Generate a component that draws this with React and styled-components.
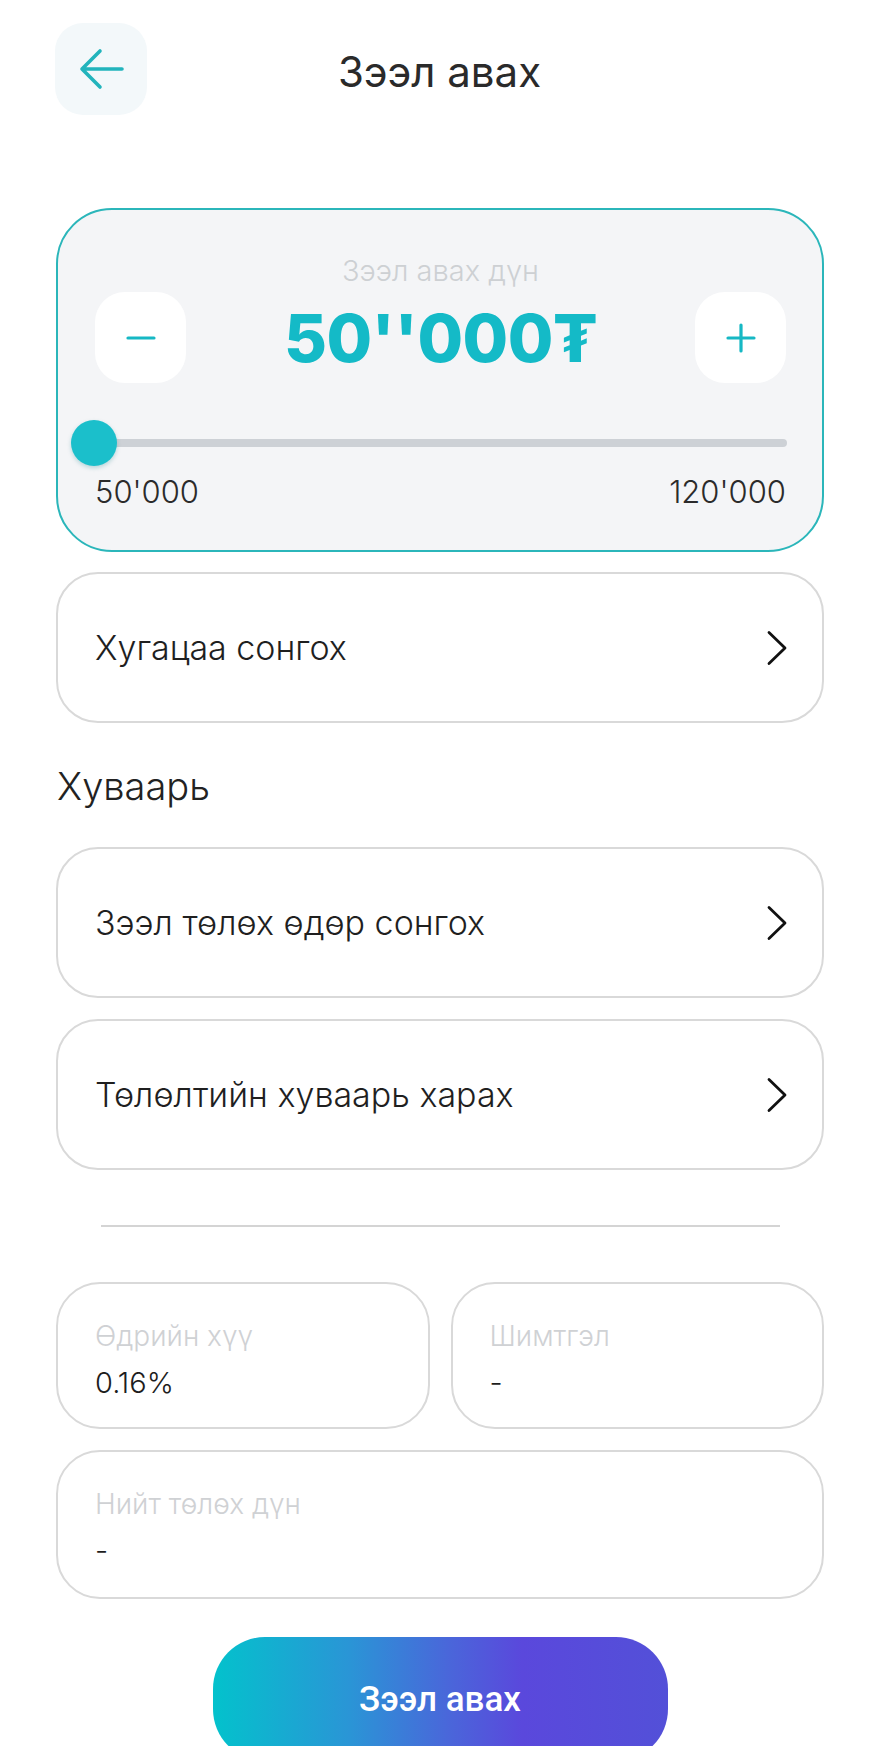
import React from 'react';
import styled, { createGlobalStyle } from 'styled-components';

// Global reset: no body margin, one sans stack for the whole screen
const GlobalStyle = createGlobalStyle`
  * { box-sizing: border-box; }
  body {
    margin: 0;
    background: #ffffff;
    font-family: Inter, "Noto Sans", sans-serif;
    color: #222222;
  }
`;

const BackIcon = () => (
  <svg width="92" height="92" viewBox="0 0 92 92" fill="none">
    <path d="M27 46 H67 M45 28 L27 46 L45 64" stroke="#22b4bc" strokeWidth="3.6" strokeLinecap="round" strokeLinejoin="round" />
  </svg>
);

const Chevron = () => (
  <svg width="22" height="36" viewBox="0 0 22 36" fill="none">
    <path d="M3 2.5 L19 18 L3 33.5" stroke="#111111" strokeWidth="2.8" strokeLinecap="round" strokeLinejoin="round" />
  </svg>
);

const MinusIcon = () => (
  <svg width="30" height="30" viewBox="0 0 30 30" fill="none">
    <path d="M2 15 H28" stroke="#16b8c4" strokeWidth="3.2" strokeLinecap="round" />
  </svg>
);

const PlusIcon = () => (
  <svg width="30" height="30" viewBox="0 0 30 30" fill="none">
    <path d="M2 15 H28 M15 2 V28" stroke="#16b8c4" strokeWidth="3.2" strokeLinecap="round" />
  </svg>
);

const LoanScreen = () => {
  const min = 50000;
  const max = 120000;
  const amount = 50000;
  const pct = ((amount - min) / (max - min)) * 100;

  return (
    <Page>
      <Header>
        <BackButton aria-label="back"><BackIcon /></BackButton>
        <Title>Зээл авах</Title>
        <span />
      </Header>

      <AmountCard>
        <AmountLabel>Зээл авах дүн</AmountLabel>
        <AmountRow>
          <StepButton aria-label="minus"><MinusIcon /></StepButton>
          <Amount>50''000₮</Amount>
          <StepButton aria-label="plus"><PlusIcon /></StepButton>
        </AmountRow>
        <Slider>
          <Track />
          <Thumb style={{ left: `calc(${pct}% - ${pct * 0.46}px)` }} />
        </Slider>
        <RangeLabels>
          <span>50'000</span>
          <span>120'000</span>
        </RangeLabels>
      </AmountCard>

      <SelectRow $top={20}>
        <RowText>Хугацаа сонгох</RowText>
        <Chevron />
      </SelectRow>

      <SectionTitle>Хуваарь</SectionTitle>

      <SelectRow $top={38}>
        <RowText>Зээл төлөх өдөр сонгох</RowText>
        <Chevron />
      </SelectRow>
      <SelectRow $top={21}>
        <RowText>Төлөлтийн хуваарь харах</RowText>
        <Chevron />
      </SelectRow>

      <Divider />

      <InfoGrid>
        <InfoCard>
          <InfoLabel>Өдрийн хүү</InfoLabel>
          <InfoValue>0.16%</InfoValue>
        </InfoCard>
        <InfoCard>
          <InfoLabel>Шимтгэл</InfoLabel>
          <InfoValue>-</InfoValue>
        </InfoCard>
        <InfoCard $wide>
          <InfoLabel>Нийт төлөх дүн</InfoLabel>
          <InfoValue>-</InfoValue>
        </InfoCard>
      </InfoGrid>

      <SubmitButton>Зээл авах</SubmitButton>
    </Page>
  );
};

const Page = styled.div`
  height: 1746px;
  overflow: hidden;
  padding: 23px 56px 0;
  display: flex;
  flex-direction: column;

  & > * {
    flex-shrink: 0;
  }
`;

const Header = styled.header`
  display: grid;
  grid-template-columns: 92px 1fr 92px;
  align-items: center;
  margin-left: -1px;
`;

const BackButton = styled.button`
  width: 92px;
  height: 92px;
  border: none;
  border-radius: 28px;
  background: #f3f8fa;
  padding: 0;
  display: flex;
  align-items: center;
  justify-content: center;
`;

const Title = styled.h1`
  margin: 0;
  text-align: center;
  font-size: 42px;
  font-weight: 400;
  color: #2a2a2a;
  line-height: 48px;
  padding-top: 6px;
`;

const AmountCard = styled.section`
  margin-top: 93px;
  height: 344px;
  border: 2px solid #2bb6ba;
  border-radius: 56px;
  background: #f4f5f7;
  padding: 0 36px 0 37px;
  display: flex;
  flex-direction: column;
`;

const AmountLabel = styled.div`
  margin-top: 44px;
  text-align: center;
  font-size: 29px;
  line-height: 34px;
  font-weight: 300;
  color: #cdd0d3;
`;

const AmountRow = styled.div`
  margin-top: 4px;
  height: 91px;
  display: flex;
  align-items: center;
  justify-content: space-between;
`;

const StepButton = styled.button`
  width: 91px;
  height: 91px;
  border: none;
  border-radius: 30px;
  background: #ffffff;
  padding: 0;
  display: flex;
  align-items: center;
  justify-content: center;
`;

const Amount = styled.div`
  font-size: 66px;
  line-height: 1;
  font-weight: 800;
  letter-spacing: -0.5px;
  color: #14bac7;
`;

const Slider = styled.div`
  position: relative;
  margin: 37px -1px 0 -24px;
  height: 46px;
  display: flex;
  align-items: center;
`;

const Track = styled.div`
  flex: 1;
  height: 8px;
  margin-left: 23px;
  border-radius: 4px;
  background: #cdd1d6;
`;

const Thumb = styled.div`
  position: absolute;
  top: 0;
  width: 46px;
  height: 46px;
  border-radius: 50%;
  background: #1bbfcb;
  box-shadow: 0 2px 4px rgba(0, 120, 130, 0.25);
`;

const RangeLabels = styled.div`
  margin-top: 8px;
  display: flex;
  justify-content: space-between;
  font-size: 31px;
  line-height: 36px;
  font-weight: 300;
  color: #2b2b2b;
`;

const SelectRow = styled.div`
  margin-top: ${p => p.$top}px;
  height: 151px;
  border: 2px solid #d9d9d9;
  border-radius: 42px;
  padding: 0 34px 0 37px;
  display: flex;
  align-items: center;
  justify-content: space-between;
`;

const RowText = styled.span`
  font-size: 34px;
  font-weight: 300;
  color: #1f1f1f;
`;

const SectionTitle = styled.h2`
  margin: 40px 0 0 1px;
  font-size: 38px;
  line-height: 46px;
  font-weight: 300;
  color: #222222;
`;

const Divider = styled.hr`
  margin: 55px 44px 0 45px;
  border: none;
  height: 2px;
  background: #d4d4d4;
`;

const InfoGrid = styled.div`
  margin-top: 55px;
  display: grid;
  grid-template-columns: 1fr 1fr;
  gap: 21px;
`;

const InfoCard = styled.div`
  grid-column: ${p => (p.$wide ? '1 / -1' : 'auto')};
  height: ${p => (p.$wide ? 149 : 147)}px;
  border: 2px solid #d9d9d9;
  border-radius: 44px;
  padding: 35px 20px 0 37px;
`;

const InfoLabel = styled.div`
  font-size: 28px;
  line-height: 34px;
  font-weight: 300;
  color: #cfd1d4;
`;

const InfoValue = styled.div`
  margin-top: 12px;
  font-size: 29px;
  line-height: 36px;
  font-weight: 300;
  color: #1d1d1d;
`;

const SubmitButton = styled.button`
  margin-top: 38px;
  align-self: center;
  width: 455px;
  height: 124px;
  border: none;
  border-radius: 52px;
  background: linear-gradient(90deg, #03c2cc 0%, #2a95d6 30%, #4a66da 52%, #5a48dc 68%, #5350d8 100%);
  color: #ffffff;
  font-family: Roboto, "Noto Sans", sans-serif;
  font-size: 35px;
  font-weight: 500;
`;

export default function App() {
  return (
    <>
      <GlobalStyle />
      <LoanScreen />
    </>
  );
}
